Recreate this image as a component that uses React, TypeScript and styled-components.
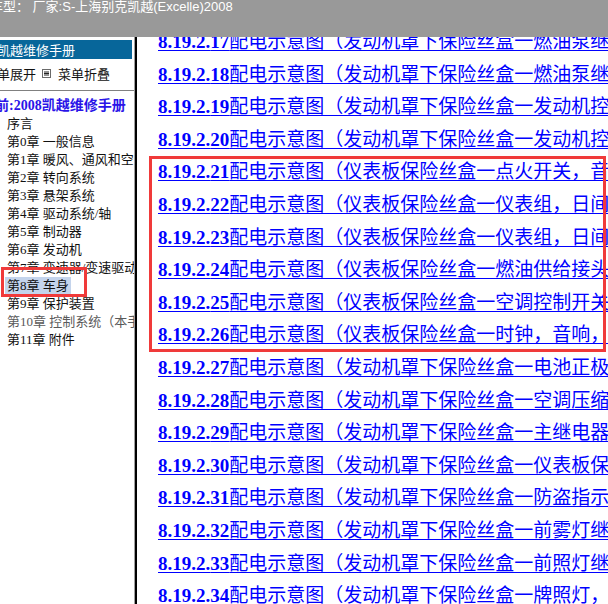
import React from "react";
import styled, { createGlobalStyle } from "styled-components";

const GlobalStyle = createGlobalStyle`
  html, body {
    margin: 0;
    padding: 0;
    background: #fff;
    overflow: hidden;
  }
  body {
    font-family: "Liberation Sans", "Noto Sans CJK SC", sans-serif;
  }
`;

const Page = styled.div`
  width: 608px;
  height: 604px;
  overflow: hidden;
`;

/* window is scrolled sideways: the first 30px of the frameset are out of view */
const Frameset = styled.div`
  margin-left: -30px;
  height: 100%;
  display: grid;
  grid-template-rows: 37px 1fr;
`;

const TopBar = styled.div`
  background: #999999;
  color: #fff;
  font-size: 13px;
  line-height: 14px;
  padding-left: 20px;
  white-space: nowrap;
`;

const Body = styled.div`
  display: grid;
  grid-template-columns: 164px 3px 1fr;
  min-height: 0;
`;

const Side = styled.div`
  overflow: hidden;
  padding-top: 3px;
  font-family: "Noto Sans CJK SC", sans-serif;
  font-size: 13px;
  color: #000;
`;

const SideHead = styled.div`
  margin-right: 2px;
  height: 19px;
  line-height: 19px;
  background: #07669a;
  color: #fff;
  padding-left: 27px;
  white-space: nowrap;
`;

const MenuBar = styled.div`
  margin-top: 5px;
  height: 18px;
  padding-left: 14px;
  padding-bottom: 8px;
  border-bottom: 1px solid #808080;
  display: flex;
  align-items: center;
  white-space: nowrap;
  color: #111;
`;

const MenuIcon = styled.svg`
  width: 9px;
  height: 9px;
  margin: 0 7px 0 6px;
`;

const TreeTitle = styled.div`
  margin-top: 6px;
  height: 18px;
  line-height: 18px;
  padding-left: 11px;
  white-space: nowrap;
  font-family: "Liberation Serif", "Noto Sans CJK SC", serif;
  font-size: 14px;
  font-weight: bold;
  color: #2a14e8;
`;

const Tree = styled.ul`
  list-style: none;
  margin: 0;
  padding: 0;
`;

const Item = styled.li<{ $muted?: boolean; $marked?: boolean }>`
  position: relative;
  height: 18px;
  line-height: 18px;
  padding-left: 37px;
  white-space: nowrap;
  font-family: "Liberation Serif", "Noto Sans CJK SC", serif;
  font-size: 13px;
  color: ${(p) => (p.$muted ? "#5a5a5a" : "#111")};

  ${(p) =>
    p.$marked &&
    `
    &::after {
      content: "";
      position: absolute;
      left: 31px;
      top: -10px;
      width: 86px;
      height: 30px;
      box-sizing: border-box;
      border: 3px solid #f03a3a;
    }
  `}
`;

const ItemLabel = styled.span<{ $selected?: boolean }>`
  padding: 1px 2px;
  margin-left: -2px;
  background: ${(p) => (p.$selected ? "#c4d4ec" : "transparent")};
`;

const Divider = styled.div`
  border-left: 1px solid #a0a0a0;
  background: #000;
`;

const Main = styled.div`
  overflow: hidden;
  background: #fff;
`;

/* content frame is scrolled down a little, row 17 sits half under the top bar */
const Links = styled.div`
  margin-top: -11px;
  padding-left: 21px;
`;

const Group = styled.div`
  margin-left: -9px;
  padding-left: 9px;
  width: 457px;
  box-sizing: border-box;
  outline: 3px solid #f03a3a;
  outline-offset: -3px;
`;

const Row = styled.a`
  display: block;
  height: 32.6px;
  line-height: 32.6px;
  white-space: nowrap;
  font-family: "Liberation Serif", serif;
  font-size: 19px;
  color: #0000ff;
  text-decoration: underline;
  text-decoration-thickness: 1px;
  text-underline-offset: 2px;
`;

const RowNo = styled.span`
  font-weight: bold;
`;

const RowText = styled.span`
  font-family: "Noto Sans CJK SC", sans-serif;
  line-height: 1;
`;

type Link = { no: number; text: string };

const before: Link[] = [
  { no: 17, text: "配电示意图（发动机罩下保险丝盒一燃油泵继电器）" },
  { no: 18, text: "配电示意图（发动机罩下保险丝盒一燃油泵继电器电源）" },
  { no: 19, text: "配电示意图（发动机罩下保险丝盒一发动机控制模块）" },
  { no: 20, text: "配电示意图（发动机罩下保险丝盒一发动机控制模块电源）" },
];

const marked: Link[] = [
  { no: 21, text: "配电示意图（仪表板保险丝盒一点火开关，音响）" },
  { no: 22, text: "配电示意图（仪表板保险丝盒一仪表组，日间行车灯）" },
  { no: 23, text: "配电示意图（仪表板保险丝盒一仪表组，日间行车灯继电器）" },
  { no: 24, text: "配电示意图（仪表板保险丝盒一燃油供给接头）" },
  { no: 25, text: "配电示意图（仪表板保险丝盒一空调控制开关）" },
  { no: 26, text: "配电示意图（仪表板保险丝盒一时钟，音响，点烟器）" },
];

const after: Link[] = [
  { no: 27, text: "配电示意图（发动机罩下保险丝盒一电池正极）" },
  { no: 28, text: "配电示意图（发动机罩下保险丝盒一空调压缩机继电器）" },
  { no: 29, text: "配电示意图（发动机罩下保险丝盒一主继电器）" },
  { no: 30, text: "配电示意图（发动机罩下保险丝盒一仪表板保险丝盒）" },
  { no: 31, text: "配电示意图（发动机罩下保险丝盒一防盗指示灯）" },
  { no: 32, text: "配电示意图（发动机罩下保险丝盒一前雾灯继电器）" },
  { no: 33, text: "配电示意图（发动机罩下保险丝盒一前照灯继电器）" },
  { no: 34, text: "配电示意图（发动机罩下保险丝盒一牌照灯，尾灯）" },
];

const chapters = [
  "序言",
  "第0章 一般信息",
  "第1章 暖风、通风和空调系统",
  "第2章 转向系统",
  "第3章 悬架系统",
  "第4章 驱动系统/轴",
  "第5章 制动器",
  "第6章 发动机",
  "第7章 变速器/变速驱动桥",
  "第8章 车身",
  "第9章 保护装置",
  "第10章 控制系统（本手册未收录）",
  "第11章 附件",
];

function LinkRow({ item }: { item: Link }) {
  return (
    <Row href="#">
      <RowNo>8.19.2.{item.no}</RowNo>
      <RowText>{item.text}</RowText>
    </Row>
  );
}

export default function App() {
  return (
    <Page>
      <GlobalStyle />
      <Frameset>
        <TopBar>车型： 厂家:S-上海别克凯越(Excelle)2008</TopBar>
        <Body>
          <Side>
            <SideHead>凯越维修手册</SideHead>
            <MenuBar>
              菜单展开
              <MenuIcon viewBox="0 0 9 9">
                <rect x="0.5" y="0.5" width="8" height="8" fill="#fff" stroke="#6a6a6a" />
                <path d="M2 3h5M2 4.5h5M2 6h5" stroke="#222" strokeWidth="1" />
              </MenuIcon>
              菜单折叠
            </MenuBar>
            <TreeTitle>当前:2008凯越维修手册</TreeTitle>
            <Tree>
              {chapters.map((c) => (
                <Item key={c} $muted={c.startsWith("第10章")} $marked={c === "第8章 车身"}>
                  <ItemLabel $selected={c === "第8章 车身"}>{c}</ItemLabel>
                </Item>
              ))}
            </Tree>
          </Side>
          <Divider />
          <Main>
            <Links>
              {before.map((l) => (
                <LinkRow key={l.no} item={l} />
              ))}
              <Group>
                {marked.map((l) => (
                  <LinkRow key={l.no} item={l} />
                ))}
              </Group>
              {after.map((l) => (
                <LinkRow key={l.no} item={l} />
              ))}
            </Links>
          </Main>
        </Body>
      </Frameset>
    </Page>
  );
}
